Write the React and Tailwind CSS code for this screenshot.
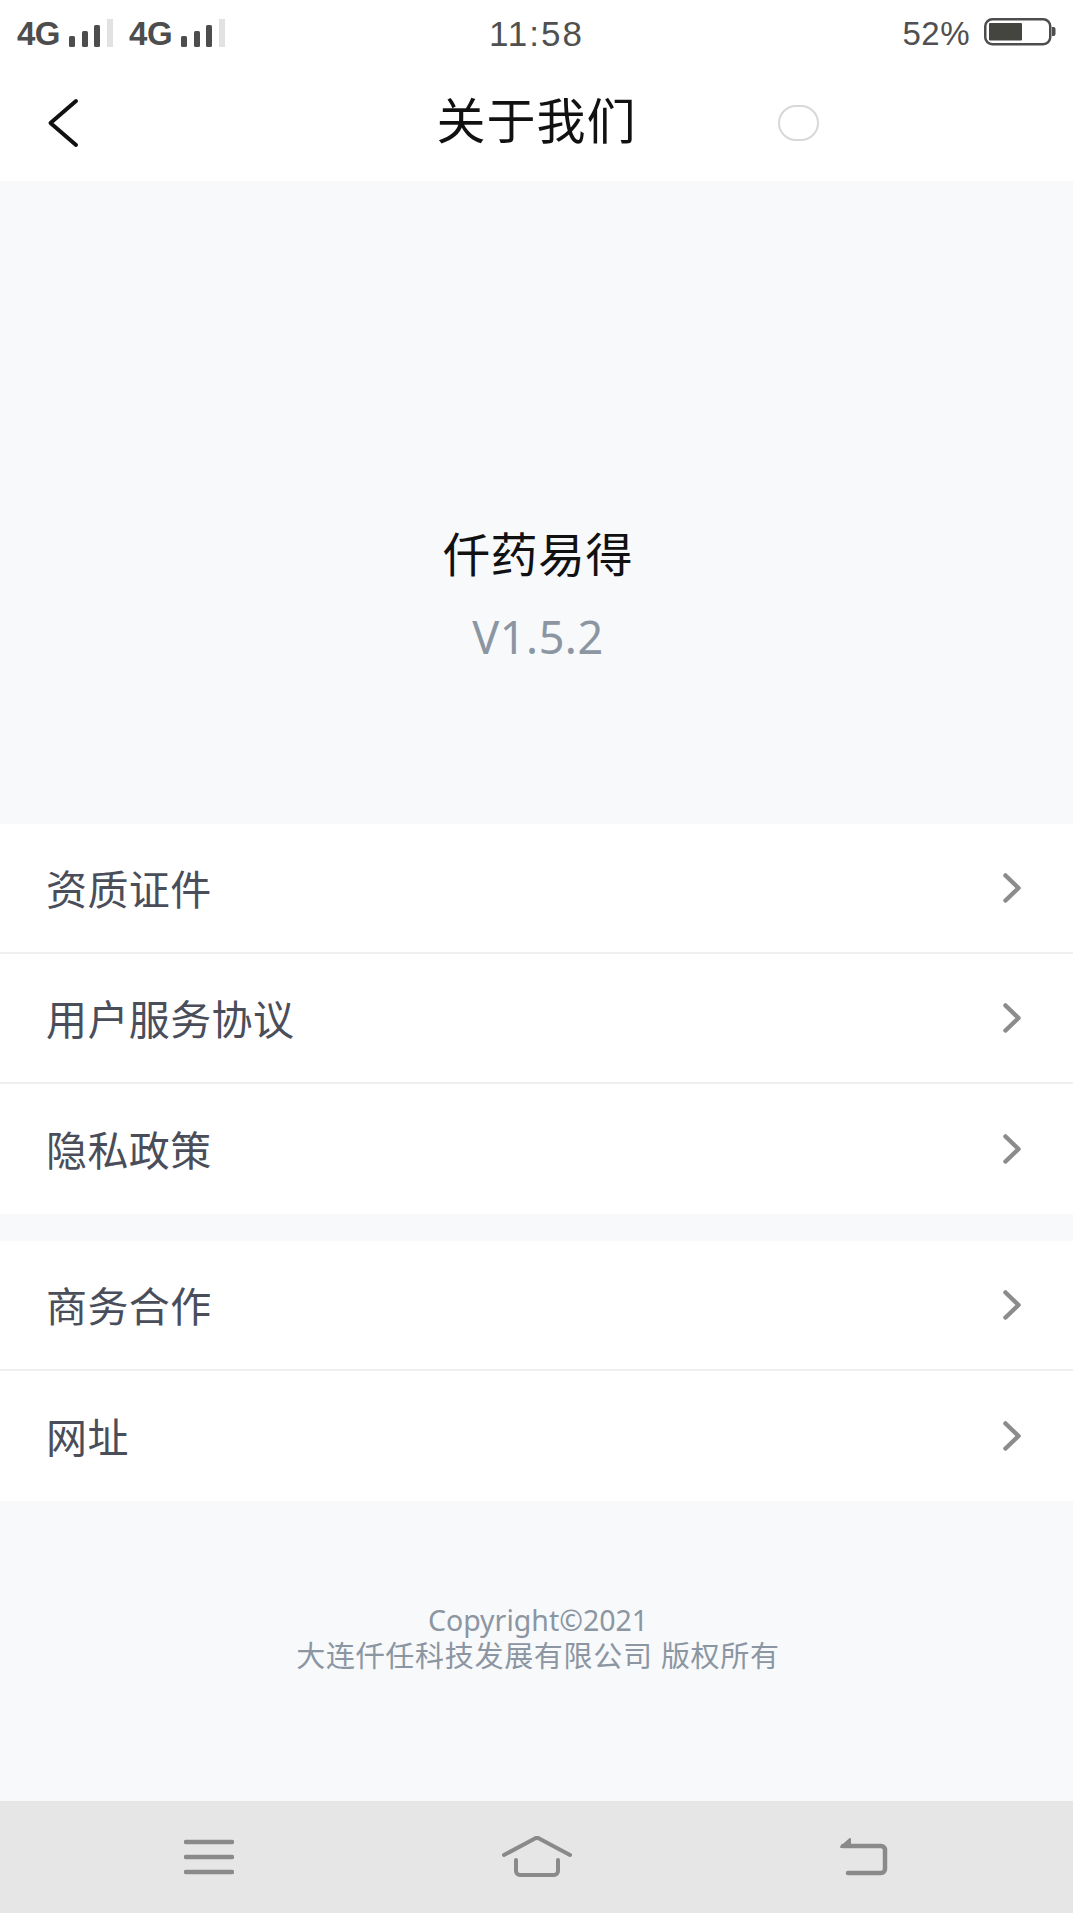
import React from "react";

const CJK = "font-['Noto_Sans_CJK_SC','Noto_Sans',sans-serif]";

const groups = [
  ["资质证件", "用户服务协议", "隐私政策"],
  ["商务合作", "网址"],
];

const Signal = () => (
  <div className="flex items-end gap-[9px]">
    <span className="text-[33px] leading-[28px] font-bold tracking-[-0.5px] text-[#4d4d4d] font-['Liberation_Sans',sans-serif]">
      4G
    </span>
    <svg width="44" height="28" viewBox="0 0 44 28" className="mb-[1px]">
      <rect x="0" y="17" width="6" height="11" rx="1.5" fill="#4d4d4d" />
      <rect x="13" y="12" width="6" height="16" rx="1.5" fill="#4d4d4d" />
      <rect x="25" y="6" width="6" height="22" rx="1.5" fill="#4d4d4d" />
      <rect x="38" y="0" width="6" height="28" fill="#e2e2e2" />
    </svg>
  </div>
);

const Battery = () => (
  <svg width="72" height="30" viewBox="0 0 72 30">
    <rect x="1.25" y="1.25" width="65" height="25" rx="7" fill="none" stroke="#4d4d4d" strokeWidth="2.5" />
    <rect x="5" y="5" width="33" height="17.5" rx="1" fill="#454540" />
    <path d="M68 9h1.5a2 2 0 0 1 2 2v5a2 2 0 0 1-2 2H68z" fill="#4d4d4d" />
  </svg>
);

const Row = ({ label, last }) => (
  <div className={`flex items-center justify-between bg-white pl-[46px] pr-[52px] ${last ? "h-[130px]" : "h-[130px] border-b-2 border-[#efefef]"}`}>
    <span className={`${CJK} pb-[2px] text-[41px] leading-none tracking-[0.4px] text-[#4a4e5a]`}>{label}</span>
    <svg width="18" height="30" viewBox="0 0 18 30" fill="none">
      <path d="M2.5 2.5L15.5 15L2.5 27.5" stroke="#8c8c8c" strokeWidth="4.5" strokeLinecap="round" strokeLinejoin="round" />
    </svg>
  </div>
);

export default function App() {
  return (
    <div className="flex h-[1913px] w-[1073px] flex-col overflow-hidden bg-[#f8f9fb]">
      {/* status bar */}
      <div className="grid h-[60px] grid-cols-3 items-center bg-white pl-[17px] pr-[17px] pt-[6px]">
        <div className="flex items-center gap-[16px]">
          <Signal />
          <Signal />
        </div>
        <div className="text-center text-[35px] leading-none tracking-[2px] text-[#505050] font-['Liberation_Sans',sans-serif]">
          11:58
        </div>
        <div className="flex items-center justify-end gap-[14px]">
          <span className="text-[33px] leading-none tracking-[0.5px] text-[#505050] font-['Liberation_Sans',sans-serif]">52%</span>
          <Battery />
        </div>
      </div>

      {/* header */}
      <div className="relative flex h-[121px] items-center justify-center bg-white pb-[6px]">
        <svg width="34" height="50" viewBox="0 0 34 50" fill="none" className="absolute left-[47px] top-[38px]">
          <path d="M29 3L3.5 25L29 47" stroke="#111" strokeWidth="4" strokeLinecap="round" strokeLinejoin="round" />
        </svg>
        <h1 className={`${CJK} text-[49px] leading-none tracking-[1px] text-[#111]`}>关于我们</h1>
        <div className="absolute left-[778px] top-[45px] h-[36px] w-[41px] rounded-full border-2 border-[#d8d8d8] bg-white" />
      </div>

      {/* app info */}
      <div className="flex h-[643px] flex-col items-center pl-[3px] pt-[345px]">
        <div className={`${CJK} text-[47px] leading-[52px] tracking-[0.5px] text-[#111]`}>仟药易得</div>
        <div className="mt-[33px] text-[45px] leading-[52px] tracking-[0.5px] text-[#8b96a2] font-['Noto_Sans',sans-serif]">V1.5.2</div>
      </div>

      {/* menu */}
      <div className="flex flex-col gap-[27px]">
        {groups.map((rows) => (
          <div key={rows[0]} className="flex flex-col">
            {rows.map((label, i) => (
              <Row key={label} label={label} last={i === rows.length - 1} />
            ))}
          </div>
        ))}
      </div>

      {/* copyright */}
      <div className="flex flex-1 flex-col items-center pl-[3px] pt-[102px] leading-[35px] text-[#8b96a2] font-['Noto_Sans','Noto_Sans_CJK_SC',sans-serif]">
        <div className="text-[28.5px]">Copyright©2021</div>
        <div className="text-[29px] tracking-[0.7px]">大连仟任科技发展有限公司 版权所有</div>
      </div>

      {/* nav bar */}
      <div className="grid h-[112px] grid-cols-3 items-center bg-[#e6e6e6] px-[45px]">
        <div className="flex justify-center">
          <svg width="50" height="36" viewBox="0 0 50 36" fill="none" stroke="#8a8a8a" strokeWidth="4.5" strokeLinecap="round">
            <path d="M2 3h46M2 18h46M2 33h46" />
          </svg>
        </div>
        <div className="flex justify-center pl-[2px]">
          <svg width="70" height="42" viewBox="0 0 70 42" fill="none" stroke="#8a8a8a" strokeWidth="4" strokeLinecap="round" strokeLinejoin="round">
            <path d="M2 19L32 3a5 5 0 0 1 6 0L68 19" />
            <path d="M14 24v11a4 4 0 0 0 4 4h34a4 4 0 0 0 4-4V24" />
          </svg>
        </div>
        <div className="flex justify-center">
          <svg width="50" height="38" viewBox="0 0 50 38" fill="none" stroke="#8a8a8a" strokeWidth="4.5" strokeLinecap="round" strokeLinejoin="round">
            <path d="M4 8h38a4 4 0 0 1 4 4v19a4 4 0 0 1-4 4H9" />
            <path d="M2 9L11 1v8z" fill="#8a8a8a" strokeWidth="2" />
          </svg>
        </div>
      </div>
    </div>
  );
}
